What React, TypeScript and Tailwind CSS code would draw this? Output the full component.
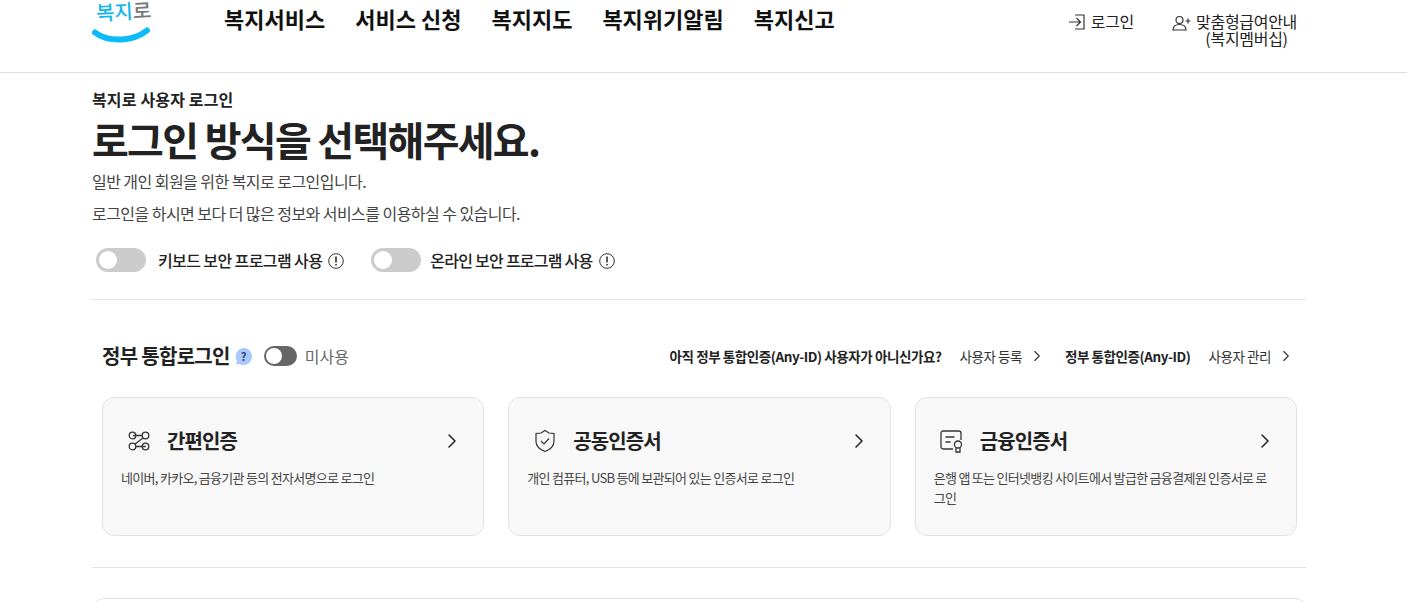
import React from "react";
import { ChevronRight } from "lucide-react";

const font = { fontFamily: '"Noto Sans CJK KR", "Noto Sans", sans-serif' };

const navItems = ["복지서비스", "서비스 신청", "복지지도", "복지위기알림", "복지신고"];

const Toggle = ({ label, labelClass }: { label: string; labelClass: string }) => (
  <div className="flex items-center">
    <span className="w-[50px] h-[24px] rounded-full bg-[#cccccc] flex items-center pl-[3px]">
      <span className="w-[18px] h-[18px] rounded-full bg-white" />
    </span>
    <span className={`text-[16px] font-medium text-[#222] ${labelClass}`}>{label}</span>
    <svg className="ml-[6px] mt-[1px]" width="16" height="16" viewBox="0 0 16 16" fill="none" stroke="#333" strokeWidth="1">
      <circle cx="8" cy="8" r="7.3" />
      <path d="M8 3.500v6M8 11v1.500" strokeWidth="1.600" />
    </svg>
  </div>
);

const cards = [
  {
    title: "간편인증",
    desc: "네이버, 카카오, 금융기관 등의 전자서명으로 로그인",
    icon: (
      <svg width="24" height="24" viewBox="0 0 24 24" fill="none" stroke="#333" strokeWidth="1.300">
        <circle cx="5.500" cy="6.500" r="3.300" />
        <circle cx="18.500" cy="6.500" r="3.300" />
        <circle cx="5.500" cy="17.500" r="3.300" />
        <circle cx="18.500" cy="17.500" r="3.300" />
        <path d="M6 6.500h9.200M8.800 17.500h10M16 9l-8 6" />
      </svg>
    ),
  },
  {
    title: "공동인증서",
    desc: "개인 컴퓨터, USB 등에 보관되어 있는 인증서로 로그인",
    icon: (
      <svg width="24" height="24" viewBox="0 0 24 24" fill="none" stroke="#333" strokeWidth="1.200">
        <path d="M12 1.500l4 2.500 5 .5v8c0 5-4 8-9 10-5-2-9-5-9-10v-8l5-.5z" />
        <path d="M8 12l3 3 5-5.500" />
      </svg>
    ),
  },
  {
    title: "금융인증서",
    desc: "은행 앱 또는 인터넷뱅킹 사이트에서 발급한 금융결제원 인증서로 로그인",
    icon: (
      <svg width="24" height="24" viewBox="0 0 24 24" fill="none" stroke="#333" strokeWidth="1.300">
        <path d="M13 20H3a2 2 0 0 1-2-2V4a2 2 0 0 1 2-2h16a2 2 0 0 1 2 2v7" />
        <path d="M5.500 8h9M5.500 13h5" />
        <circle cx="18" cy="15.500" r="3.500" />
        <path d="M16 18.500V23h4v-4.500" />
      </svg>
    ),
  },
];

export default function App() {
  return (
    <div className="h-[602px] overflow-hidden bg-white text-[#222]" style={font}>
      <header className="h-[73px] border-b border-[#dddddd] flex items-start pl-[92px] pr-[110px]">
        <div className="w-[132px] h-[46px] relative overflow-hidden">
          <svg width="60" height="46" viewBox="0 0 60 46" fill="none">
            <path d="M3 32.500C10 38 20 40 30 39.500S48 36 55 30.500" stroke="#0bbcf8" strokeWidth="6" strokeLinecap="round" />
          </svg>
          <span className="absolute left-[4px] top-[-7px] text-[20px] font-medium leading-[36px] -rotate-3 text-[#14b6ee]">
            복지<span className="text-[#77797d]">로</span>
          </span>
        </div>
        <nav className="flex gap-[30px] pt-[2px]">
          {navItems.map((n) => (
            <span key={n} className="text-[22px] font-bold text-[#111] leading-[32px]">{n}</span>
          ))}
        </nav>
        <div className="ml-auto flex items-start pt-[13px] text-[16px] leading-[17px] text-[#222] tracking-[-0.3px]">
          <span className="flex items-center gap-[6px]">
            <svg width="16" height="16" viewBox="0 0 16 16" fill="none" stroke="#333" strokeWidth="1.200">
              <path d="M0 8h11M7.500 4l4 4-4 4M6 1h9v14H6" />
            </svg>
            로그인
          </span>
          <span className="ml-[38px] flex items-start gap-[5px]">
            <svg className="mt-[2px]" width="19" height="16" viewBox="0 0 19 16" fill="none" stroke="#333" strokeWidth="1.200">
              <circle cx="7.500" cy="5" r="3.500" />
              <path d="M1 15c0-4 2-5.500 6.500-5.500S14 11 14 15H1zM13.500 6h5M16 3.500v5" />
            </svg>
            <span className="text-center">맞춤형급여안내<br />(복지멤버십)</span>
          </span>
        </div>
      </header>

      <main className="pl-[92px] pr-[100px]">
        <p className="mt-[15px] text-[16px] leading-[22px] font-bold text-[#222] tracking-[0.15px]">복지로 사용자 로그인</p>
        <h1 className="mt-[4px] text-[40px] leading-[50px] font-bold tracking-[-1.700px] text-[#222]">로그인 방식을 선택해주세요.</h1>
        <p className="mt-[1px] text-[16px] leading-[32px] text-[#444] tracking-[-0.55px]">일반 개인 회원을 위한 복지로 로그인입니다.</p>
        <p className="text-[16px] leading-[32px] text-[#444] tracking-[-0.55px]">로그인을 하시면 보다 더 많은 정보와 서비스를 이용하실 수 있습니다.</p>

        <div className="mt-[19px] pl-[4px] flex gap-[27px] pb-[27px] border-b border-[#e5e5e5]">
          <Toggle label="키보드 보안 프로그램 사용" labelClass="ml-[12px] tracking-[-0.6px]" />
          <Toggle label="온라인 보안 프로그램 사용" labelClass="ml-[9px] tracking-[-0.75px]" />
        </div>

        <section className="px-[10px] border-b border-[#e5e5e5] pb-[31px]">
          <div className="flex items-center h-[34px] mt-[39px]">
            <h2 className="text-[20px] font-bold tracking-[-0.7px]">정부 통합로그인</h2>
            <svg className="ml-[5px]" width="17" height="17" viewBox="0 0 17 17">
              <path d="M8.500 0a8.500 8.500 0 1 1-4 16L1 16.500 2 13A8.500 8.500 0 0 1 8.500 0z" fill="#a9c8fb" />
              <text x="8.500" y="12.500" textAnchor="middle" fontSize="11" fontWeight="700" fill="#2a3f80">?</text>
            </svg>
            <span className="ml-[12px] w-[33px] h-[20px] rounded-full bg-[#666666] flex items-center pl-[2px]">
              <span className="w-[16px] h-[16px] rounded-full bg-white" />
            </span>
            <span className="ml-[8px] text-[16px] text-[#666]">미사용</span>
            <div className="ml-auto pr-[2px] flex items-center text-[13.500px] tracking-[-0.43px]">
              <span className="font-bold text-[#222]">아직 정부 통합인증(Any-ID) 사용자가 아니신가요?</span>
              <span className="ml-[18px] text-[#333] flex items-center">사용자 등록<ChevronRight className="ml-[6px]" size={18} strokeWidth={1.500} /></span>
              <span className="ml-[19px] font-bold text-[#222]">정부 통합인증(Any-ID)</span>
              <span className="ml-[18px] text-[#333] flex items-center">사용자 관리<ChevronRight className="ml-[6px]" size={18} strokeWidth={1.500} /></span>
            </div>
          </div>

          <div className="mt-[24px] grid grid-cols-3 gap-[24px]">
            {cards.map((c) => (
              <div key={c.title} className="h-[139px] rounded-[12px] border border-[#e2e2e2] bg-[#f8f8f8] px-[18px] pt-[27px]">
                <div className="flex items-center h-[32px]">
                  <span className="ml-[6px] w-[24px] flex justify-center">{c.icon}</span>
                  <span className="ml-[16px] text-[20px] font-bold tracking-[-0.9px] text-[#222]">{c.title}</span>
                  <ChevronRight className="ml-auto mr-[1px]" size={24} strokeWidth={1.500} />
                </div>
                <p className="mt-[11px] pr-[8px] text-[13px] leading-[20px] text-[#444] tracking-[-0.7px]">{c.desc}</p>
              </div>
            ))}
          </div>
        </section>

        <div className="mt-[30px] h-[60px] rounded-[12px] border border-[#e0e0e0]" />
      </main>
    </div>
  );
}
